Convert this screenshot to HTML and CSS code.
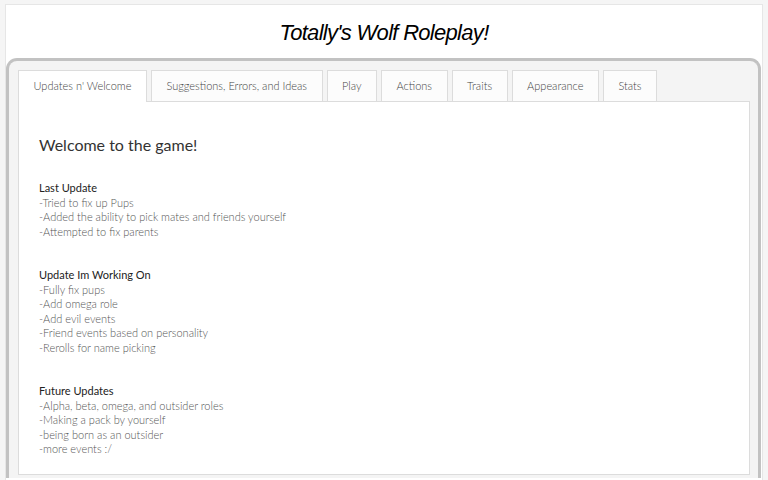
FILE: index.html
```html
<!DOCTYPE html>
<html>
<head>
<meta charset="utf-8">
<link rel="stylesheet" href="styles.css">
</head>
<body>
<div class="card">
  <h1 class="title">Totally's Wolf Roleplay!</h1>
  <div class="tabs-box">
    <ul class="tabs">
      <li class="tab active">Updates n' Welcome</li>
      <li class="tab">Suggestions, Errors, and Ideas</li>
      <li class="tab">Play</li>
      <li class="tab">Actions</li>
      <li class="tab">Traits</li>
      <li class="tab">Appearance</li>
      <li class="tab">Stats</li>
    </ul>
    <div class="panel">
      <h2 class="welcome">Welcome to the game!</h2>
      <div class="notes">
        <div class="head">Last Update</div>
        <div>-Tried to fix up Pups</div>
        <div>-Added the ability to pick mates and friends yourself</div>
        <div>-Attempted to fix parents</div>
        <div class="blank"></div>
        <div class="blank"></div>
        <div class="head">Update Im Working On</div>
        <div>-Fully fix pups</div>
        <div>-Add omega role</div>
        <div>-Add evil events</div>
        <div>-Friend events based on personality</div>
        <div>-Rerolls for name picking</div>
        <div class="blank"></div>
        <div class="blank"></div>
        <div class="head">Future Updates</div>
        <div>-Alpha, beta, omega, and outsider roles</div>
        <div>-Making a pack by yourself</div>
        <div>-being born as an outsider</div>
        <div>-more events :/</div>
      </div>
    </div>
  </div>
</div>
</body>
</html>
```
FILE: styles.css
```css
html, body {
  margin: 0;
  padding: 0;
  height: 100%;
  overflow: hidden;
}
body {
  background: #f5f5f5;
  padding: 4px 5px 0 5px;
  box-sizing: border-box;
  font-family: Lato, "Open Sans", sans-serif;
}
.card {
  background: #fff;
  border: 1px solid #e6e6e6;
  border-bottom: none;
  height: 100%;
  box-sizing: border-box;
}
.title {
  margin: 0;
  height: 53px;
  line-height: 55px;
  text-align: center;
  font-family: "Liberation Sans", Arial, sans-serif;
  font-style: italic;
  font-weight: normal;
  font-size: 22px;
  letter-spacing: -0.7px;
  color: #000;
}
.tabs-box {
  margin: 0 1px 0 0;
  border: 3px solid #c2c2c2;
  border-bottom: none;
  border-radius: 11px 11px 0 0;
  background: #f4f4f4;
  padding: 9px 8px 0 9px;
  height: 420px;
  box-sizing: border-box;
}
.tabs {
  list-style: none;
  margin: 0;
  padding: 0;
  display: flex;
  gap: 4px;
  height: 31px;
  position: relative;
  z-index: 1;
}
.tab {
  height: 31px;
  box-sizing: border-box;
  padding: 0 14.5px;
  line-height: 30px;
  border: 1px solid #dcdcdc;
  border-bottom: none;
  background: #fcfcfc;
  font-size: 11px;
  font-weight: 300;
  color: #444;
  white-space: nowrap;
}
.tab.active {
  background: #fff;
  height: 32px;
}
.panel {
  background: #fff;
  border: 1px solid #dcdcdc;
  height: 374px;
  box-sizing: border-box;
  padding: 0 20px;
}
.welcome {
  margin: 32px 0 25px;
  font-size: 16px;
  line-height: 22px;
  font-weight: 400;
  color: #333;
}
.notes {
  font-size: 11px;
  line-height: 14.5px;
  color: #555;
  font-weight: 300;
}
.notes .head {
  color: #222;
  font-weight: 400;
}
.blank {
  height: 14.5px;
}
```
